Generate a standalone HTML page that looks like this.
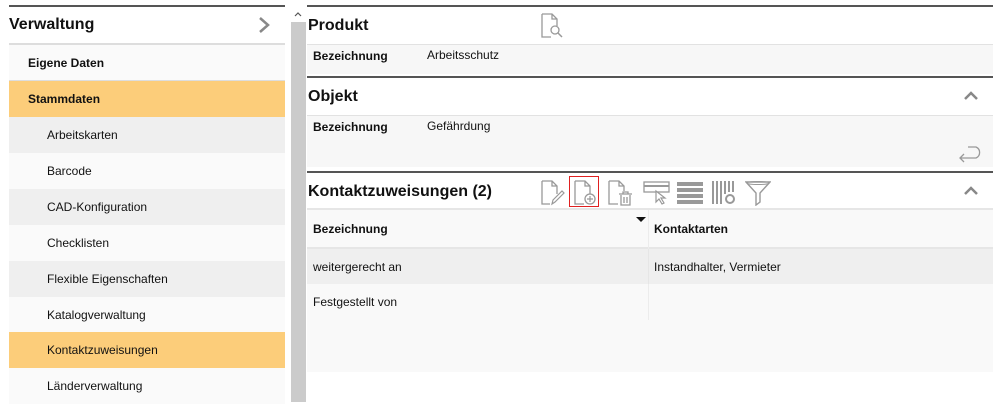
<!DOCTYPE html>
<html><head><style>
*{margin:0;padding:0;box-sizing:border-box}
body{width:1000px;height:402px;background:#fff;position:relative;overflow:hidden;font-family:"Liberation Sans",Arial,sans-serif;color:#111}
.a{position:absolute}
.mi{position:absolute;left:9px;width:276px;height:36px;font-size:12px;line-height:36px;padding-left:38px}
.b{font-weight:bold}
.t{font-size:12px}
</style></head><body>
<div class="a" style="left:9px;top:5px;width:276px;height:2px;background:#555"></div>
<div class="a b" style="left:9px;top:16px;font-size:16px">Verwaltung</div>
<svg class="a" style="left:257px;top:16px" width="14" height="18"><path d="M3 2 L11 9 L3 16" fill="none" stroke="#888" stroke-width="2.5"/></svg>
<div class="a" style="left:9px;top:43px;width:276px;height:2px;background:#ddd"></div>
<div class="mi b" style="top:45px;background:#fafafa;padding-left:19px;font-size:12px">Eigene Daten</div>
<div class="a" style="left:9px;top:80px;width:276px;height:1px;background:#ddd"></div>
<div class="mi b" style="top:81px;background:#fccd7a;padding-left:19px;font-size:12px">Stammdaten</div>
<div class="mi" style="top:117px;background:#efefef">Arbeitskarten</div>
<div class="mi" style="top:153px;background:#fafafa">Barcode</div>
<div class="mi" style="top:189px;background:#efefef">CAD-Konfiguration</div>
<div class="mi" style="top:225px;background:#fafafa">Checklisten</div>
<div class="mi" style="top:261px;background:#efefef">Flexible Eigenschaften</div>
<div class="mi" style="top:297px;background:#fafafa">Katalogverwaltung</div>
<div class="mi" style="top:332px;background:#fccd7a">Kontaktzuweisungen</div>
<div class="mi" style="top:368px;background:#fafafa">Länderverwaltung</div>
<div class="a" style="left:291px;top:22px;width:15px;height:380px;background:#cbcbcb"></div>
<svg class="a" style="left:293px;top:10px" width="10" height="8"><path d="M2 6 L5 3 L8 6" fill="none" stroke="#555" stroke-width="1.2"/></svg>
<div class="a" style="left:307px;top:5px;width:686px;height:2px;background:#555"></div>
<div class="a b" style="left:308px;top:17px;font-size:16px">Produkt</div>
<svg class="a" style="left:540px;top:13px" width="24" height="26"><path d="M2 1 H12 L17 6 V13 M12 1 V6 H17 M2 1 V24 H11" fill="none" stroke="#999" stroke-width="1.3"/><circle cx="15" cy="17" r="4" fill="none" stroke="#999" stroke-width="1.3"/><path d="M18 20 L22 24" stroke="#999" stroke-width="1.5"/></svg>
<div class="a" style="left:307px;top:44px;width:686px;height:30px;background:#f7f7f7;border-top:1px solid #e2e2e2"></div>
<div class="a b t" style="left:313px;top:49px">Bezeichnung</div>
<div class="a t" style="left:427px;top:48px">Arbeitsschutz</div>
<div class="a" style="left:307px;top:76px;width:686px;height:2px;background:#555"></div>
<div class="a b" style="left:308px;top:88px;font-size:16px">Objekt</div>
<svg class="a" style="left:962px;top:90px" width="18" height="12"><path d="M3 9 L9 3 L15 9" fill="none" stroke="#888" stroke-width="2.5"/></svg>
<div class="a" style="left:307px;top:115px;width:686px;height:52px;background:#f7f7f7;border-top:1px solid #e2e2e2"></div>
<div class="a b t" style="left:313px;top:120px">Bezeichnung</div>
<div class="a t" style="left:427px;top:119px">Gefährdung</div>
<svg class="a" style="left:956px;top:143px" width="28" height="20"><path d="M12 4 H20 A6 6 0 0 1 20 15 H4 M8 11 L4 15 L8 19" fill="none" stroke="#999" stroke-width="1.3"/></svg>
<div class="a" style="left:307px;top:171px;width:686px;height:2px;background:#555"></div>
<div class="a b" style="left:308px;top:183px;font-size:16px">Kontaktzuweisungen (2)</div>
<svg class="a" style="left:540px;top:180px" width="26" height="26"><path d="M2 1 H12 L17 6 V14 M12 1 V6 H17 M2 1 V24 H10" fill="none" stroke="#999" stroke-width="1.3"/><path d="M12 24 L13 20 L22 11 L24 13 L15 22 Z" fill="none" stroke="#999" stroke-width="1.2"/></svg>
<div class="a" style="left:569px;top:176px;width:30px;height:31px;border:1.5px solid #e02020"></div>
<svg class="a" style="left:573px;top:180px" width="26" height="26"><path d="M2 1 H12 L17 6 V14 M12 1 V6 H17 M2 1 V24 H11" fill="none" stroke="#999" stroke-width="1.3"/><circle cx="17" cy="19" r="5" fill="none" stroke="#999" stroke-width="1.3"/><path d="M17 16 V22 M14 19 H20" stroke="#999" stroke-width="1.2"/></svg>
<svg class="a" style="left:607px;top:180px" width="26" height="26"><path d="M2 1 H12 L17 6 V11 M12 1 V6 H17 M2 1 V24 H11" fill="none" stroke="#999" stroke-width="1.3"/><path d="M12 14 H25 M16 14 V12 H21 V14 M14 15 V25 H23 V15 M17 17 V23 M20 17 V23" fill="none" stroke="#999" stroke-width="1.3"/></svg>
<svg class="a" style="left:643px;top:181px" width="28" height="24"><rect x="1" y="1" width="25" height="10" fill="none" stroke="#999" stroke-width="1.3"/><path d="M1 5 H26" stroke="#999" stroke-width="2"/><path d="M13 10 L13 21 L16 18 L19 23 L21 22 L18 17 L22 17 Z" fill="#fff" stroke="#999" stroke-width="1.2"/></svg>
<svg class="a" style="left:677px;top:181px" width="26" height="24"><path d="M0 3 H26 M0 9 H26 M0 15 H26 M0 21 H26" stroke="#999" stroke-width="4"/></svg>
<svg class="a" style="left:711px;top:180px" width="28" height="26"><path d="M2 1 V24 M6 1 V24 M10 1 V24 M14 1 V14 M18 1 V12 M22 1 V12" stroke="#999" stroke-width="2"/><circle cx="19" cy="19" r="4" fill="none" stroke="#999" stroke-width="2"/></svg>
<svg class="a" style="left:745px;top:180px" width="26" height="26"><path d="M1 2 H25 L15 13 V22 L11 25 V13 Z" fill="none" stroke="#999" stroke-width="1.4"/><ellipse cx="13" cy="3" rx="11" ry="1.5" fill="none" stroke="#999"/></svg>
<svg class="a" style="left:962px;top:185px" width="18" height="12"><path d="M3 9 L9 3 L15 9" fill="none" stroke="#888" stroke-width="2.5"/></svg>
<div class="a" style="left:307px;top:208px;width:686px;height:164px;background:#f9f9f9;border-top:2px solid #e6e6e6"></div>
<div class="a" style="left:307px;top:247px;width:686px;height:2px;background:#e6e6e6"></div>
<div class="a b t" style="left:313px;top:222px">Bezeichnung</div>
<svg class="a" style="left:635px;top:216px" width="12" height="8"><path d="M1 1 H11 L6 6 Z" fill="#111"/></svg>
<div class="a" style="left:648px;top:210px;width:1px;height:110px;background:#ececec"></div>
<div class="a b t" style="left:654px;top:222px">Kontaktarten</div>
<div class="a" style="left:307px;top:249px;width:686px;height:35px;background:#efefef"></div>
<div class="a" style="left:648px;top:249px;width:1px;height:35px;background:#e6e6e6"></div>
<div class="a t" style="left:313px;top:260px">weitergerecht an</div>
<div class="a t" style="left:654px;top:260px">Instandhalter, Vermieter</div>
<div class="a t" style="left:313px;top:295px">Festgestellt von</div>
</body></html>
